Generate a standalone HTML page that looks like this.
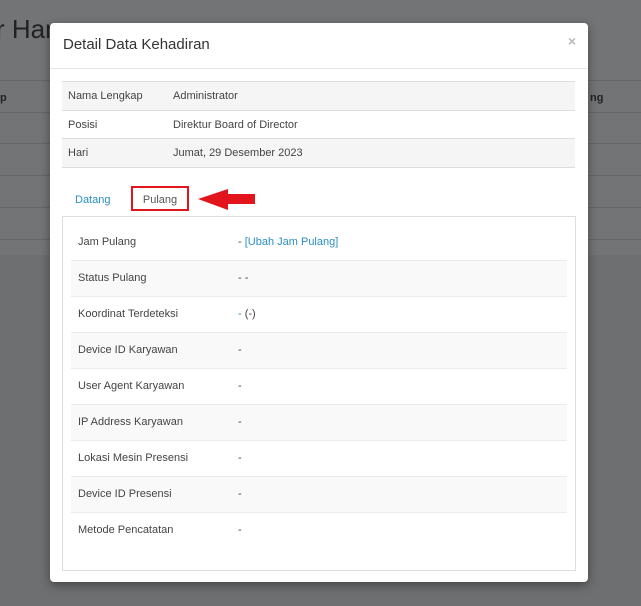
<!DOCTYPE html>
<html><head><meta charset="utf-8"><style>
*{box-sizing:border-box;margin:0;padding:0}
body{width:641px;height:606px;background:#6e6f71;font-family:"Liberation Sans",sans-serif;position:relative;overflow:hidden}
.bgt{position:absolute;left:0;top:0;width:641px;height:255px;background:#737476}
.bgtitle{position:absolute;left:-4px;top:14px;font-size:26px;color:#222}
.bgl{position:absolute;left:0;height:1px;width:641px;background:#666}
.modal{position:absolute;left:50px;top:23px;width:538px;height:559px;background:#fff;border-radius:4px;box-shadow:0 3px 10px rgba(0,0,0,.4)}
.hd{height:46px;border-bottom:1px solid #e5e5e5;position:relative}
.hd h4{position:absolute;left:13px;top:13px;font-size:15px;font-weight:normal;color:#333}
.x{position:absolute;right:12px;top:10px;font-size:14px;color:#bbb;font-weight:bold}
.info{position:absolute;left:12px;top:58px;width:513px;border-top:1px solid #ddd;font-size:11px;color:#444}
.info div{height:28.7px;border-bottom:1px solid #ddd;position:relative}
.info div:nth-child(odd){background:#f5f5f5}
.info span{position:absolute;top:8px}
.tab1{position:absolute;left:25px;top:171px;font-size:11px;color:#2a8ec2}
.tab2{position:absolute;left:81px;top:163px;width:58px;height:25px;border:2px solid #e2141c;font-size:11px;color:#555;text-align:center;line-height:24px}
.pane{position:absolute;left:12px;top:193px;width:514px;height:355px;border:1px solid #ddd}
.row{position:absolute;left:8px;width:496px;height:36px;border-bottom:1px solid #ebebeb;font-size:11px;color:#444}
.row.s{background:#f9f9f9}
.row span{position:absolute;top:17px;transform:translateY(-50%)}
.l{left:7px}.v{left:167px}
.arrow{position:absolute;left:198px;top:188px}
</style></head><body>
<div class="bgt"></div>
<div class="bgtitle">r Har</div>
<div style="position:absolute;left:0;top:92px;font-size:11px;font-weight:bold;color:#222">p</div>
<div style="position:absolute;left:590px;top:92px;font-size:11px;font-weight:bold;color:#222">ng</div>
<div class="bgl" style="top:80px"></div><div class="bgl" style="top:112px"></div><div class="bgl" style="top:143px"></div><div class="bgl" style="top:175px"></div><div class="bgl" style="top:207px"></div><div class="bgl" style="top:239px"></div>
<div class="modal">
<div class="hd"><h4>Detail Data Kehadiran</h4><span class="x">×</span></div>
<div class="info">
<div><span style="left:6px">Nama Lengkap</span><span style="left:111px">Administrator</span></div>
<div><span style="left:6px">Posisi</span><span style="left:111px">Direktur Board of Director</span></div>
<div><span style="left:6px">Hari</span><span style="left:111px">Jumat, 29 Desember 2023</span></div>
</div>
<div class="tab1">Datang</div>
<div class="tab2">Pulang</div>
<div class="pane">
<div class="row" style="top:8px"><span class="l">Jam Pulang</span><span class="v">- <span style="position:static;transform:none;color:#2a8ec2">[Ubah Jam Pulang]</span></span></div>
<div class="row s" style="top:44px"><span class="l">Status Pulang</span><span class="v">- -</span></div>
<div class="row" style="top:80px"><span class="l">Koordinat Terdeteksi</span><span class="v"><span style="position:static;transform:none;color:#2a8ec2">-</span> (-)</span></div>
<div class="row s" style="top:116px"><span class="l">Device ID Karyawan</span><span class="v">-</span></div>
<div class="row" style="top:152px"><span class="l">User Agent Karyawan</span><span class="v">-</span></div>
<div class="row s" style="top:188px"><span class="l">IP Address Karyawan</span><span class="v">-</span></div>
<div class="row" style="top:224px"><span class="l">Lokasi Mesin Presensi</span><span class="v">-</span></div>
<div class="row s" style="top:260px"><span class="l">Device ID Presensi</span><span class="v">-</span></div>
<div class="row" style="top:296px;border:none"><span class="l">Metode Pencatatan</span><span class="v">-</span></div>
</div>
</div>
<svg class="arrow" width="60" height="24"><polygon points="0,11 30,1 30,6 57,6 57,16 30,16 30,22" fill="#e2141c"/></svg>
</body></html>
